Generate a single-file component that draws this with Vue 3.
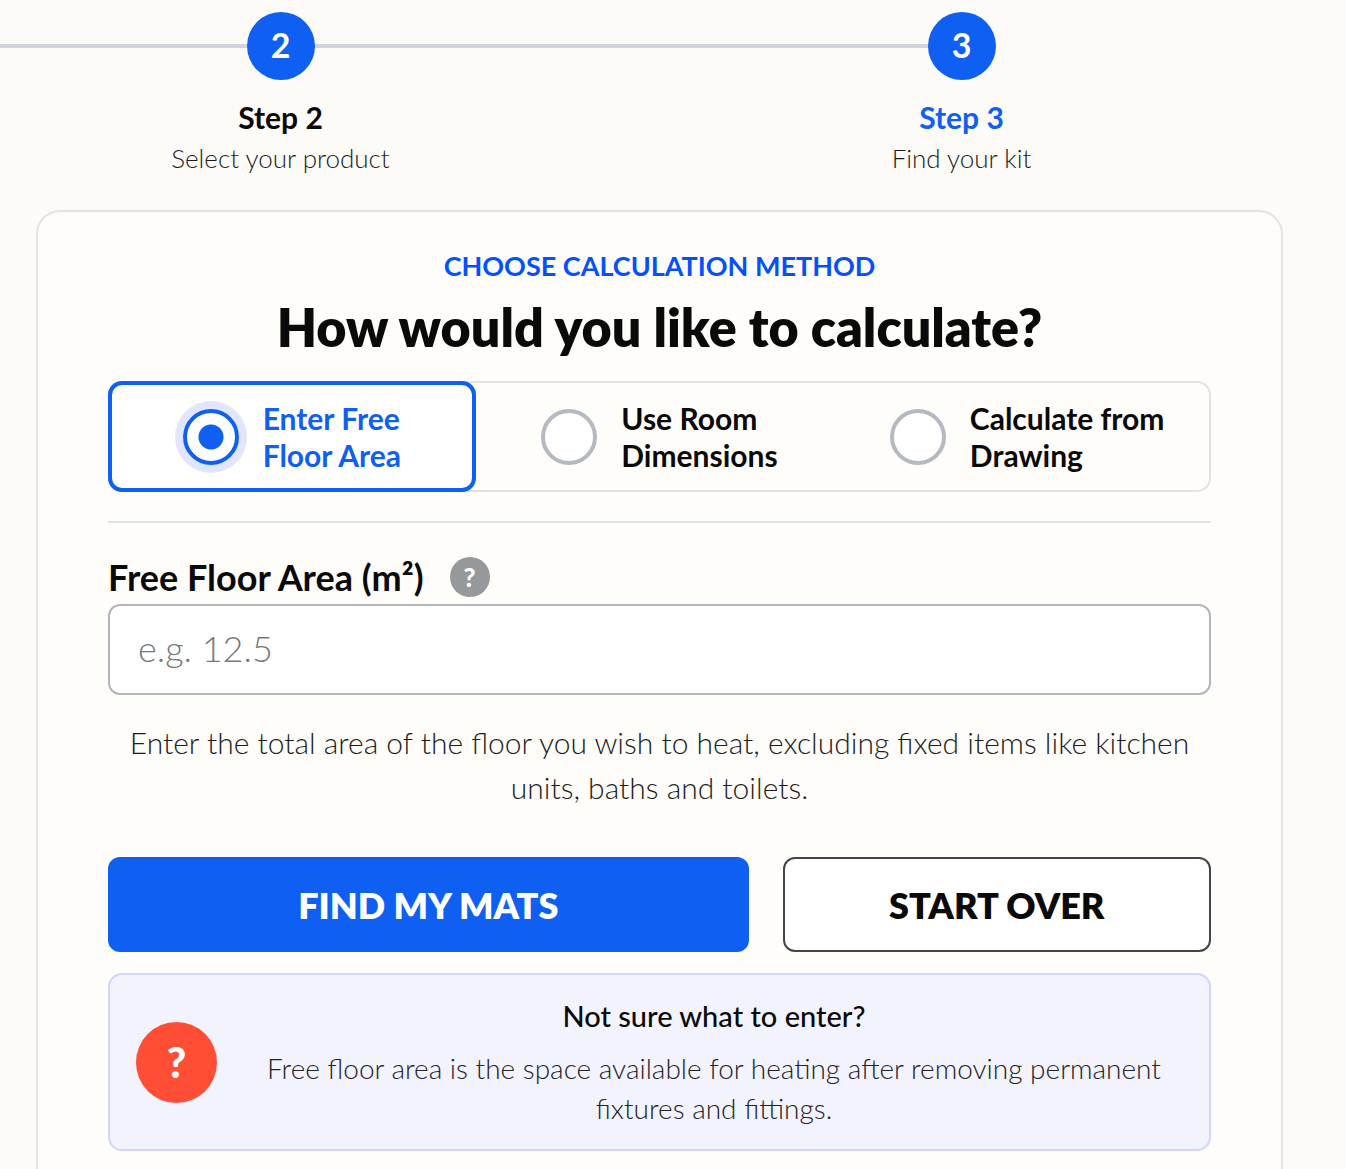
<template>
  <main class="page">
    <ol class="steps">
      <li v-for="step in steps" :key="step.number" class="step" :class="{ current: step.number === currentStep }">
        <div class="step-track">
          <span class="step-line"></span>
          <span class="step-number">{{ step.number }}</span>
          <span class="step-line"></span>
        </div>
        <span class="step-name">Step {{ step.number }}</span>
        <span class="step-text">{{ step.text }}</span>
      </li>
    </ol>

    <form class="card" @submit.prevent>
      <p class="eyebrow">CHOOSE CALCULATION METHOD</p>
      <h1 class="title">How would you like to calculate?</h1>

      <div class="methods" role="radiogroup" aria-label="Calculation method">
        <label
          v-for="item in methods"
          :key="item.value"
          class="method"
          :class="{ selected: method === item.value }"
        >
          <input v-model="method" class="method-radio" type="radio" name="method" :value="item.value" />
          <span class="method-label">{{ item.label }}</span>
        </label>
      </div>

      <hr class="divider" />

      <div class="field-head">
        <label class="field-label" for="floor-area">Free Floor Area (m²)</label>
        <button class="help" type="button" aria-label="Help">?</button>
      </div>
      <input
        id="floor-area"
        v-model="area"
        class="field-input"
        type="text"
        inputmode="decimal"
        placeholder="e.g. 12.5"
      />
      <p class="field-note">
        Enter the total area of the floor you wish to heat, excluding fixed items like kitchen units, baths and toilets.
      </p>

      <div class="actions">
        <button class="btn btn-primary" type="submit">FIND MY MATS</button>
        <button class="btn btn-outline" type="button" @click="reset">START OVER</button>
      </div>

      <aside class="hint">
        <span class="hint-icon">?</span>
        <div class="hint-body">
          <h2 class="hint-title">Not sure what to enter?</h2>
          <p class="hint-text">
            Free floor area is the space available for heating after removing permanent fixtures and fittings.
          </p>
        </div>
      </aside>
    </form>
  </main>
</template>

<script setup>
import { ref } from 'vue'

const currentStep = 3
const steps = [
  { number: 2, text: 'Select your product' },
  { number: 3, text: 'Find your kit' },
]

const methods = [
  { value: 'area', label: 'Enter Free\nFloor Area' },
  { value: 'room', label: 'Use Room\nDimensions' },
  { value: 'drawing', label: 'Calculate from\nDrawing' },
]

const method = ref('area')
const area = ref('')

function reset() {
  method.value = 'area'
  area.value = ''
}
</script>

<style>
body {
  background: #fcfbf7;
}
</style>

<style scoped>
.page {
  display: flex;
  flex-direction: column;
  box-sizing: border-box;
  min-height: 100vh;
  padding-top: 12px;
  overflow: hidden;
  font-family: Lato, "Liberation Sans", sans-serif;
  color: #0a0a0a;
}

/* the first visible step runs off the left edge */
.steps {
  display: grid;
  grid-template-columns: 1fr 1fr;
  margin: 0 44px 34px -60px;
  padding: 0;
  list-style: none;
}

.step {
  display: flex;
  flex-direction: column;
  align-items: center;
}

.step-track {
  display: flex;
  align-items: center;
  align-self: stretch;
  margin-bottom: 18px;
}

.step-line {
  flex: 1;
  height: 4px;
  background: #d1d4da;
}

.step:last-child .step-line:last-child {
  background: none;
}

.step-number {
  display: flex;
  align-items: center;
  justify-content: center;
  box-sizing: border-box;
  width: 68px;
  height: 68px;
  padding-bottom: 4px;
  border-radius: 50%;
  background: #0f5ff2;
  color: #fff;
  font-size: 34px;
  font-weight: 700;
}

.step-name {
  font-size: 30px;
  font-weight: 700;
  line-height: 38px;
}

.step.current .step-name {
  color: #0f5ff2;
}

.step-text {
  margin-top: 4px;
  font-size: 26px;
  font-weight: 300;
  line-height: 36px;
  color: #1c1c1c;
}

.card {
  flex: 1;
  margin: 0 63px 0 36px;
  padding: 37px 70px 16px;
  border: 2px solid #e3e3e0;
  border-bottom: 0;
  border-radius: 24px 24px 0 0;
  background: #fefdfa;
}

.eyebrow {
  margin: 0 0 14px;
  font-size: 27px;
  font-weight: 700;
  line-height: 34px;
  text-align: center;
  color: #0550fb;
}

.title {
  margin: 0 0 24px;
  font-size: 52px;
  font-weight: 800;
  line-height: 60px;
  text-align: center;
}

.methods {
  display: grid;
  grid-template-columns: repeat(3, 1fr);
  border-radius: 14px;
  box-shadow: inset 0 0 0 2px #e1e2e2;
}

.method {
  display: flex;
  align-items: center;
  justify-content: center;
  gap: 24px;
  box-sizing: border-box;
  height: 111px;
  border: 4px solid transparent;
  border-radius: 14px;
  font-size: 30px;
  font-weight: 700;
  line-height: 37px;
  cursor: pointer;
}

.method.selected {
  border-color: #0f5ff2;
  background: #fff;
  color: #0f5ff2;
}

.method-radio {
  appearance: none;
  flex: none;
  width: 56px;
  height: 56px;
  margin: 0;
  border: 4px solid #b5b9c0;
  border-radius: 50%;
  background: #fff;
}

.method-radio:checked {
  border-color: #0f5ff2;
  background: radial-gradient(circle, #0f5ff2 12px, #fff 13px);
  box-shadow: 0 0 0 8px #e2e6fd;
}

.method-label {
  white-space: pre-line;
}

.divider {
  height: 2px;
  margin: 29px 0 34px;
  border: 0;
  background: #e0e3e6;
}

.field-head {
  display: flex;
  align-items: center;
  gap: 26px;
  margin-bottom: 7px;
}

.field-label {
  font-size: 36px;
  font-weight: 700;
  line-height: 40px;
}

.help {
  width: 40px;
  height: 40px;
  padding: 0;
  border: 0;
  border-radius: 50%;
  background: #96999c;
  color: #fff;
  font-family: inherit;
  font-size: 26px;
  font-weight: 900;
  line-height: 40px;
}

.field-input {
  display: block;
  box-sizing: border-box;
  width: 100%;
  height: 91px;
  padding: 0 28px 4px;
  border: 2px solid #b4b5bd;
  border-radius: 12px;
  background: #fff;
  color: inherit;
  font-family: inherit;
  font-size: 36px;
  font-weight: 300;
}

.field-input::placeholder {
  color: #77797c;
  opacity: 1;
}

.field-note {
  margin: 25px 0 47px;
  font-size: 30px;
  font-weight: 300;
  line-height: 45px;
  text-align: center;
  color: #1c1c1c;
}

.actions {
  display: flex;
  gap: 34px;
  margin-bottom: 21px;
}

.btn {
  flex: 2 1 0;
  box-sizing: border-box;
  height: 95px;
  padding: 0;
  border: 2px solid #444548;
  border-radius: 12px;
  background: #fff;
  color: inherit;
  font-family: inherit;
  font-size: 36px;
  font-weight: 800;
}

.btn-primary {
  flex-grow: 3;
  border-color: #0f5ff2;
  background: #0f5ff2;
  color: #fff;
}

.hint {
  display: flex;
  align-items: center;
  gap: 28px;
  padding: 21px 26px;
  border: 2px solid #d0d6fd;
  border-radius: 14px;
  background: #f3f3fe;
}

.hint-icon {
  display: flex;
  flex: none;
  align-items: center;
  justify-content: center;
  width: 81px;
  height: 81px;
  border-radius: 50%;
  background: #ff4e35;
  color: #fff;
  font-size: 42px;
  font-weight: 900;
}

.hint-body {
  flex: 1;
  text-align: center;
}

.hint-title {
  margin: 0 0 12px;
  font-size: 29px;
  font-weight: 500;
  line-height: 40px;
}

.hint-text {
  margin: 0;
  font-size: 28px;
  font-weight: 300;
  line-height: 40px;
  color: #222228;
}
</style>
